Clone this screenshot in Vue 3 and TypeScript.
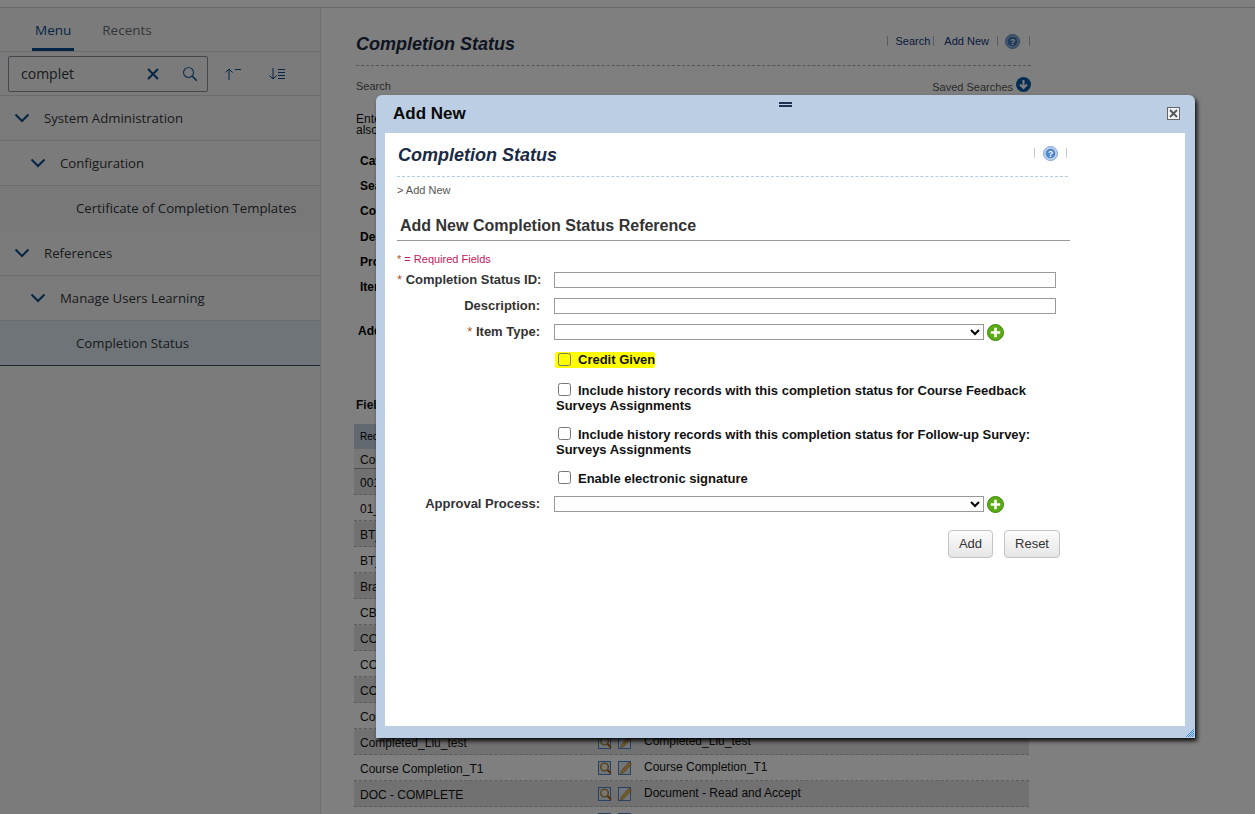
<script setup lang="ts">
const rows = [
  ['001_Status', ''], ['01_Status', ''], ['BT_Complete', ''], ['BT_Passed', ''],
  ['Brand', ''], ['CBT', ''], ['COMP', ''], ['COMP2', ''], ['COMP3', ''], ['Completed', ''],
  ['Completed_Liu_test', 'Completed_Liu_test'],
  ['Course Completion_T1', 'Course Completion_T1'],
  ['DOC - COMPLETE', 'Document - Read and Accept'],
  ['', ''],
]
const searchLabels = ['Catalog:', 'Search:', 'Completion:', 'Description:', 'Provider:', 'Item Type:']

let hatchPath = ''
for (let y = 0; y < 8; y++) {
  for (let x = 0; x < 8; x++) {
    if (x + y >= 7 && (x + y) % 2 === 1) hatchPath += `M${x} ${y + 0.5}h1`
  }
}
</script>

<template>
  <div class="page">
    <div class="topbar"></div>
    <div class="body">
      <aside class="side">
        <div class="tabs">
          <span class="tab active">Menu</span>
          <span class="tab">Recents</span>
        </div>
        <div class="searchrow">
          <div class="searchbox">
            <span class="q">complet</span>
            <svg class="clear" width="14" height="14" viewBox="0 0 14 14"><path d="M2 2l10 10M12 2L2 12" stroke="#0a4a8a" stroke-width="2" fill="none"/></svg>
            <svg class="mag" width="16" height="16" viewBox="0 0 16 16"><circle cx="6.5" cy="6.5" r="5" stroke="#2a6aa8" stroke-width="1.2" fill="none"/><path d="M10.3 10.3l4.5 4.5" stroke="#0a4a8a" stroke-width="1.6" fill="none"/></svg>
          </div>
          <svg class="sort a" width="18" height="14" viewBox="0 0 18 14"><path d="M5 13V2M1.5 5.5L5 2l3.5 3.5" stroke="#0a4a8a" fill="none"/><path d="M11 2.5h6" stroke="#0a4a8a" fill="none"/></svg>
          <svg class="sort b" width="18" height="14" viewBox="0 0 18 14"><path d="M5 1v11M1.5 8.5L5 12l3.5-3.5" stroke="#0a4a8a" fill="none"/><path d="M10 2.5h7M10 5.5h7M10 8.5h7M10 11.5h7" stroke="#0a4a8a" fill="none"/></svg>
        </div>
        <nav>
          <div class="nav l0"><svg class="chev" width="16" height="10" viewBox="0 0 16 10"><path d="M1.5 1.5L8 8l6.5-6.5" stroke="#0a4a8a" stroke-width="2" fill="none"/></svg>System Administration</div>
          <div class="nav l1"><svg class="chev" width="16" height="10" viewBox="0 0 16 10"><path d="M1.5 1.5L8 8l6.5-6.5" stroke="#0a4a8a" stroke-width="2" fill="none"/></svg>Configuration</div>
          <div class="nav l2 shade">Certificate of Completion Templates</div>
          <div class="nav l0"><svg class="chev" width="16" height="10" viewBox="0 0 16 10"><path d="M1.5 1.5L8 8l6.5-6.5" stroke="#0a4a8a" stroke-width="2" fill="none"/></svg>References</div>
          <div class="nav l1"><svg class="chev" width="16" height="10" viewBox="0 0 16 10"><path d="M1.5 1.5L8 8l6.5-6.5" stroke="#0a4a8a" stroke-width="2" fill="none"/></svg>Manage Users Learning</div>
          <div class="nav l2 sel">Completion Status</div>
        </nav>
      </aside>

      <main class="main">
        <div class="headrow">
          <h1 class="title">Completion Status</h1>
          <div class="links">
            <span class="bar"></span><span class="lnk s">Search</span><span class="bar"></span><span class="lnk n">Add New</span><span class="bar"></span>
            <svg class="help" width="15" height="15" viewBox="0 0 15 15"><circle cx="7.5" cy="7.5" r="7" fill="#8fb0dc" stroke="#5f86bd"/><circle cx="7.5" cy="7.5" r="4.8" fill="#3f74b5"/><text x="7.5" y="10.5" text-anchor="middle" font-size="8.5" font-weight="700" fill="#fff" font-family="Liberation Sans">?</text></svg>
            <span class="bar"></span>
          </div>
        </div>
        <div class="dash"></div>
        <div class="sub">
          <span>Search</span>
          <span class="saved">Saved Searches
            <svg width="15" height="15" viewBox="0 0 15 15"><circle cx="7.5" cy="7.5" r="7.5" fill="#0a5aa8"/><path d="M7.5 3v8M4 7.5l3.5 3.5L11 7.5" stroke="#fff" stroke-width="2" fill="none"/></svg>
          </span>
        </div>
        <p class="enter">Enter search criteria below and click Search. You can<br />also use wildcards to find records.</p>
        <div class="crit">
          <div v-for="l in searchLabels" :key="l" class="critrow">{{ l }}</div>
        </div>
        <div class="addl">Add</div>
        <div class="fiel">Fields</div>
        <div class="tbl">
          <div class="thead"><span>Record</span></div>
          <div class="tr first"><span class="c1">Completion Status ID</span></div>
          <div v-for="(r, i) in rows" :key="i" class="tr" :class="{ odd: i % 2 === 0 }">
            <span class="c1">{{ r[0] }}</span>
            <span class="ic">
              <svg width="14" height="15" viewBox="0 0 14 15"><rect x="0.5" y="1.5" width="12" height="13" fill="#dfe9f5" stroke="#4f84c4"/><circle cx="6.5" cy="7" r="3.8" fill="#f6f1e2" stroke="#b08a45" stroke-width="1.5"/><path d="M9.5 10l3.5 3.5" stroke="#a8601c" stroke-width="2"/></svg>
              <svg width="14" height="15" viewBox="0 0 14 15"><rect x="0.5" y="1.5" width="12" height="13" fill="#e4edf8" stroke="#4f84c4"/><path d="M3 11l8-9 2.5 2-8 9-3 .5z" fill="#e0b354" stroke="#a88430" stroke-width="0.6"/></svg>
            </span>
            <span class="c3">{{ r[1] }}</span>
          </div>
        </div>
      </main>
    </div>

    <div class="overlay"></div>

    <section class="modal">
      <header class="mhead">
        <span class="mtitle">Add New</span>
        <span class="grip"></span>
        <button class="close" type="button" aria-label="Close">
          <svg width="9" height="9" viewBox="0 0 9 9"><path d="M1 1l7 7M8 1L1 8" stroke="#555" stroke-width="1.8" fill="none"/></svg>
        </button>
      </header>
      <div class="mbody">
        <div class="inner">
          <div class="ihead">
            <h1 class="title">Completion Status</h1>
            <div class="ilinks">
              <span class="bar lt"></span>
              <svg class="ihelp" width="15" height="15" viewBox="0 0 15 15"><circle cx="7.5" cy="7.5" r="7" fill="#bcd3f0" stroke="#7fa3d4"/><circle cx="7.5" cy="7.5" r="4.8" fill="#4f86c9"/><text x="7.5" y="10.5" text-anchor="middle" font-size="8.5" font-weight="700" fill="#fff" font-family="Liberation Sans">?</text></svg>
              <span class="bar lt"></span>
            </div>
          </div>
          <div class="dash blue"></div>
          <div class="crumb">&gt; Add New</div>
          <h2 class="h2">Add New Completion Status Reference</h2>
          <div class="req"><span class="star">*</span> = Required Fields</div>

          <div class="frow first">
            <label class="lab"><span class="star">*</span> Completion Status ID:</label>
            <input class="inp" type="text" />
          </div>
          <div class="frow">
            <label class="lab">Description:</label>
            <input class="inp" type="text" />
          </div>
          <div class="frow">
            <label class="lab"><span class="star">*</span> Item Type:</label>
            <select class="sel-in"></select>
            <svg class="plus" width="17" height="17" viewBox="0 0 17 17"><circle cx="8.5" cy="8.5" r="8" fill="#5aab14" stroke="#3f8a0c"/><path d="M8.5 3.8v9.4M3.8 8.5h9.4" stroke="#fff" stroke-width="2.6"/></svg>
          </div>

          <div class="checks">
            <div class="chk c-credit"><span class="hl"><input class="yellow" type="checkbox" /><span class="ct">Credit Given</span></span></div>
            <div class="chk c-a"><input type="checkbox" /><span class="ct">Include history records with this completion status for Course Feedback</span><br />Surveys Assignments</div>
            <div class="chk c-b"><input type="checkbox" /><span class="ct">Include history records with this completion status for Follow-up Survey:</span><br />Surveys Assignments</div>
            <div class="chk c-c"><input type="checkbox" /><span class="ct">Enable electronic signature</span></div>
          </div>

          <div class="frow approval">
            <label class="lab">Approval Process:</label>
            <select class="sel-in"></select>
            <svg class="plus" width="17" height="17" viewBox="0 0 17 17"><circle cx="8.5" cy="8.5" r="8" fill="#5aab14" stroke="#3f8a0c"/><path d="M8.5 3.8v9.4M3.8 8.5h9.4" stroke="#fff" stroke-width="2.6"/></svg>
          </div>

          <div class="btns">
            <button class="btn add" type="button">Add</button>
            <button class="btn reset" type="button">Reset</button>
          </div>
        </div>
      </div>
      <svg class="hatch" width="8" height="8" viewBox="0 0 8 8"><path :d="hatchPath" stroke="#3f8fe0" stroke-width="1" fill="none"/></svg>
    </section>
  </div>
</template>

<style>
html, body { margin: 0; padding: 0; }
</style>

<style scoped>
.page {
  position: relative;
  width: 1255px;
  height: 814px;
  overflow: hidden;
  background: #fff;
  font-family: "Liberation Sans", Arial, sans-serif;
}
.topbar { height: 7px; border-bottom: 1px solid #cfcfcf; background: #fff; }
.body { display: flex; height: 806px; }

.side {
  width: 320px;
  flex: none;
  border-right: 1px solid #ddd;
  background: #f7f7f7;
  font-family: "Open Sans", sans-serif;
  color: #32363a;
}
.tabs {
  display: flex;
  height: 43px;
  padding-left: 32px;
  gap: 25px;
  border-bottom: 1px solid #d9d9d9;
  font-size: 13.5px;
}
.tab { padding: 13px 3px 0; color: #6a6d70; }
.tab.active { color: #0a4a8a; border-bottom: 3px solid #0a4a8a; height: 27px; }
.searchrow {
  display: flex;
  align-items: center;
  height: 43px;
  border-bottom: 1px solid #d9d9d9;
  position: relative;
}
.searchbox {
  height: 34px;
  margin-left: 8px;
  border: 1px solid #89919a;
  border-radius: 2px;
  display: flex;
  align-items: center;
  padding-left: 12px;
  font-size: 14px;
  width: 186px;
}
.q { flex: 1; color: #32363a; }
.clear { margin-right: 22px; }
.mag { margin-right: 9px; }
.sort.a { margin-left: 16px; }
.sort.b { margin-left: 26px; }
.nav {
  height: 44px;
  display: flex;
  align-items: center;
  border-bottom: 1px solid #d9d9d9;
  font-size: 13.2px;
  color: #32363a;
  white-space: nowrap;
}
.nav.l0 { padding-left: 14px; }
.nav.l1 { padding-left: 30px; }
.nav.l2 { padding-left: 76px; }
.nav .chev { margin-right: 14px; flex: none; }
.nav.shade { background: #f0f0f0; border-bottom-color: #f0f0f0; }
.nav.sel { background: #dfe9f2; border-bottom: 1px solid #3f5266; }

.main {
  flex: 1;
  padding: 0 0 0 35px;
  width: 675px;
  color: #000;
}
.headrow {
  display: flex;
  width: 675px;
  justify-content: space-between;
  align-items: flex-start;
  padding-top: 25px;
  height: 32px;
}
.title {
  margin: 0;
  font-size: 18px;
  line-height: 22px;
  font-weight: 700;
  font-style: italic;
  color: #1b2a44;
}
.links {
  display: flex;
  align-items: center;
  font-size: 11px;
  height: 14px;
  margin: 1px 1px 0 0;
  color: #12357a;
}
.bar { display: inline-block; width: 1px; height: 10px; background: #bbb; }
.lnk.s { margin: 0 3px 0 8px; }
.lnk.n { margin: 0 8px 0 10px; }
.links .help { margin: 1px 9px 0 7px; }
.dash { width: 675px; border-top: 1px dashed #aaa; }
.dash.blue { width: 671px; border-top-color: #b4cbe6; }
.sub {
  width: 675px;
  display: flex;
  justify-content: space-between;
  align-items: flex-end;
  height: 27px;
  font-size: 11px;
  color: #555;
  line-height: 14px;
}
.saved { display: inline-flex; align-items: center; gap: 3px; position: relative; top: 1px; }
.saved svg { margin-top: -6px; }
.enter { margin: 21px 0 0; font-size: 12px; line-height: 11px; color: #111; }
.crit { padding-left: 4px; margin-top: 13px; font-size: 12px; font-weight: 700; }
.critrow { height: 25.2px; line-height: 25px; }
.addl { margin-top: 24px; padding-left: 2px; font-size: 12px; font-weight: 700; }
.fiel { margin-top: 60px; font-size: 12px; font-weight: 700; color: #111; }
.tbl { margin-top: 12px; width: 675px; font-size: 12px; margin-left: -2px; }
.thead {
  height: 25px;
  background: #c5d2e0;
  display: flex;
  align-items: center;
  padding-left: 6px;
  font-size: 10px;
}
.tr {
  height: 25px;
  display: flex;
  align-items: center;
  padding-left: 6px;
  border-bottom: 1px dashed #bbb;
  background: #fff;
  color: #111;
}
.tr.odd { background: #e2e2e2; }
.tr.first { height: 19px; background: #eee; border-bottom: 1px solid #999; }
.c1 { width: 238px; flex: none; position: relative; top: 1px; }
.ic { width: 46px; flex: none; display: flex; gap: 6px; }
.c3 { position: relative; top: -1px; }

.overlay { position: absolute; inset: 0; background: rgba(0, 0, 0, 0.5); }

.modal {
  position: absolute;
  left: 376px;
  top: 95px;
  width: 819px;
  height: 643px;
  background: #bbcee4;
  border-radius: 6px 6px 0 0;
  box-shadow: 2px 3px 4px rgba(0, 0, 0, 0.9);
  display: flex;
  flex-direction: column;
}
.mhead {
  height: 38px;
  flex: none;
  position: relative;
  display: flex;
  align-items: center;
  padding-left: 17px;
}
.mtitle { font-size: 17px; font-weight: 700; color: #0a0a0a; }
.grip {
  position: absolute;
  left: 403px;
  top: 7px;
  width: 13px;
  height: 1px;
  border-top: 2px solid #1f3350;
  border-bottom: 2px solid #1f3350;
}
.close {
  position: absolute;
  right: 15px;
  top: 12px;
  width: 13px;
  height: 13px;
  padding: 0;
  box-sizing: border-box;
  border: 1px solid #666;
  background: #eef2f7;
  display: flex;
  align-items: center;
  justify-content: center;
}
.mbody {
  margin: 0 10px 0 9px;
  width: 800px;
  height: 593px;
  background: #fff;
  flex: none;
}
.inner { width: 673px; padding-left: 12px; }
.ihead {
  display: flex;
  justify-content: space-between;
  align-items: flex-start;
  width: 670px;
  height: 43px;
  padding-top: 11px;
  box-sizing: border-box;
  padding-left: 1px;
}
.ilinks { display: flex; align-items: center; height: 18px; margin-top: 0; }
.ihelp { margin: 0 8px 0 8px; }
.bar.lt { background: #ccc; height: 10px; }
.crumb { font-size: 11px; color: #555; margin-top: 7px; line-height: 13px; }
.h2 {
  margin: 19px 0 0;
  font-size: 16px;
  line-height: 20px;
  font-weight: 700;
  color: #333;
  padding: 0 0 4px 3px;
  border-bottom: 1px solid #999;
}
.req { margin-top: 12px; font-size: 11px; line-height: 13px; color: #c2185b; }
.star { color: #b5531d; font-weight: 400; }
.frow { display: flex; align-items: center; height: 16px; margin-top: 10px; }
.frow.first { margin-top: 6px; }
.lab {
  width: 143px;
  flex: none;
  text-align: right;
  font-size: 13px;
  font-weight: 700;
  color: #333;
  margin-right: 14px;
  white-space: nowrap;
  position: relative;
  top: -1px;
}
.inp {
  width: 502px;
  height: 16px;
  box-sizing: border-box;
  border: 1px solid #999;
  padding: 0;
  background: #fff;
}
.sel-in {
  width: 430px;
  height: 16px;
  box-sizing: border-box;
  border: 1px solid #999;
  background: #fff;
  padding: 0;
  border-radius: 0;
}
.plus { margin-left: 3px; }
.checks { padding-left: 159px; font-size: 13px; font-weight: 700; color: #111; line-height: 15px; width: 500px; }
.chk { white-space: nowrap; }
.chk input { width: 13px; height: 13px; margin: 0 7px 0 2px; vertical-align: 0; position: relative; top: 1px; }
.chk input.yellow {
  appearance: none;
  box-sizing: border-box;
  background: #ffff00;
  border: 1px solid #767676;
  border-radius: 2.5px;
  vertical-align: -1px;
}
.c-credit { margin-top: 12px; }
.hl { background: #ffff00; display: inline-block; height: 16px; line-height: 16px; margin-left: -1px; padding-left: 1px; border-radius: 2px; }
.c-a { margin-top: 14px; }
.c-b { margin-top: 13px; }
.c-c { margin-top: 13px; }
.frow.approval { margin-top: 10px; }
.btns { display: flex; justify-content: flex-end; gap: 11px; margin-top: 18px; width: 663px; }
.btn {
  height: 28px;
  font-family: "Liberation Sans", Arial, sans-serif;
  font-size: 13px;
  color: #333;
  border: 1px solid #c4c4c4;
  border-radius: 4px;
  background: linear-gradient(#fbfbfb, #e6e6e6);
  padding: 0 0 2px;
}
.btn.add { width: 45px; }
.btn.reset { width: 56px; }
.hatch { position: absolute; right: 1px; bottom: 1px; }
</style>
